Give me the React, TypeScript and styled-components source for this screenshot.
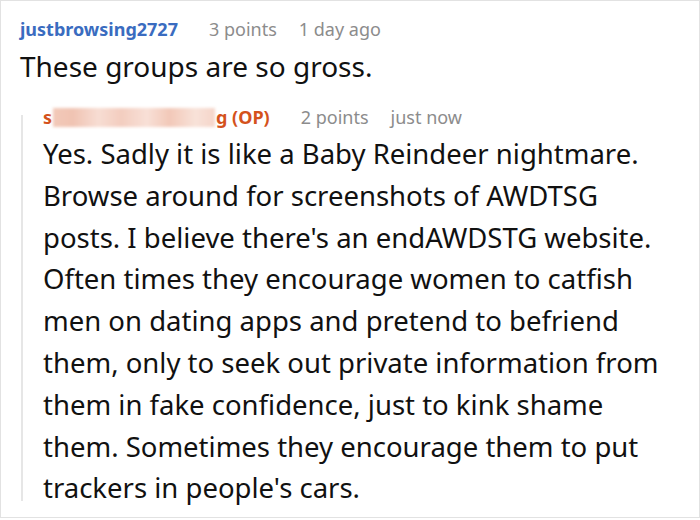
import React from "react";
import styled, { createGlobalStyle } from "styled-components";

const Global = createGlobalStyle`
  html, body { margin: 0; padding: 0; background: #fff; }
  body { font-family: "Noto Sans", "Open Sans", sans-serif; }
`;

const Frame = styled.div`
  box-sizing: border-box;
  width: 700px;
  height: 518px;
  border: 1px solid #e2e2e2;
  padding: 16px 0 0 19px;
  overflow: hidden;
`;

const Meta = styled.div`
  display: flex;
  align-items: baseline;
  gap: 22px;
  font-size: 18px;
  line-height: 24px;
  white-space: nowrap;
`;

const Author = styled.span<{ $color: string }>`
  color: ${(p) => p.$color};
  font-weight: 700;
  margin-right: 9px;
`;

const Faint = styled.span`
  color: #8c8c8c;
`;

const Blur = styled.span`
  display: inline-block;
  width: 162px;
  height: 19px;
  margin: 0 1px 0 1px;
  vertical-align: -3px;
  background: linear-gradient(
    90deg,
    #f2c9b9 0%,
    #f0c3b2 12%,
    #f7ddd3 28%,
    #f3cdbf 42%,
    #f8e0d7 58%,
    #f2c8b8 72%,
    #f8e2d9 88%,
    #f5d5c9 100%
  );
  filter: blur(1.5px);
`;

const Comment = styled.p`
  margin: 5px 0 0 0;
  color: #111;
  font-size: 28px;
  line-height: 40px;
`;

const Thread = styled.div`
  display: grid;
  grid-template-columns: 2px 1fr;
  column-gap: 20px;
  margin: 19px 0 0 1px;
`;

const ThreadLine = styled.div`
  background: #e6e6e6;
  margin: 10px 0 8px 0;
`;

const Reply = styled.div`
  display: flex;
  flex-direction: column;
`;

const Body = styled.div`
  margin-top: 4px;
  color: #111;
  font-size: 27.5px;
  line-height: 41.8px;
  white-space: nowrap;
`;

const Line = styled.span`
  display: block;
`;

const lines = [
  "Yes. Sadly it is like a Baby Reindeer nightmare.",
  "Browse around for screenshots of AWDTSG",
  "posts. I believe there's an endAWDSTG website.",
  "Often times they encourage women to catfish",
  "men on dating apps and pretend to befriend",
  "them, only to seek out private information from",
  "them in fake confidence, just to kink shame",
  "them. Sometimes they encourage them to put",
  "trackers in people's cars.",
];

export default function App() {
  return (
    <>
      <Global />
      <Frame>
        <Meta>
          <Author $color="#3a6cc0">justbrowsing2727</Author>
          <Faint>3 points</Faint>
          <Faint>1 day ago</Faint>
        </Meta>
        <Comment>These groups are so gross.</Comment>
        <Thread>
          <ThreadLine />
          <Reply>
            <Meta>
              <Author $color="#d4521c">
                s<Blur />g (OP)
              </Author>
              <Faint>2 points</Faint>
              <Faint>just now</Faint>
            </Meta>
            <Body>
              {lines.map((t, i) => (
                <Line key={i}>{t}</Line>
              ))}
            </Body>
          </Reply>
        </Thread>
      </Frame>
    </>
  );
}
